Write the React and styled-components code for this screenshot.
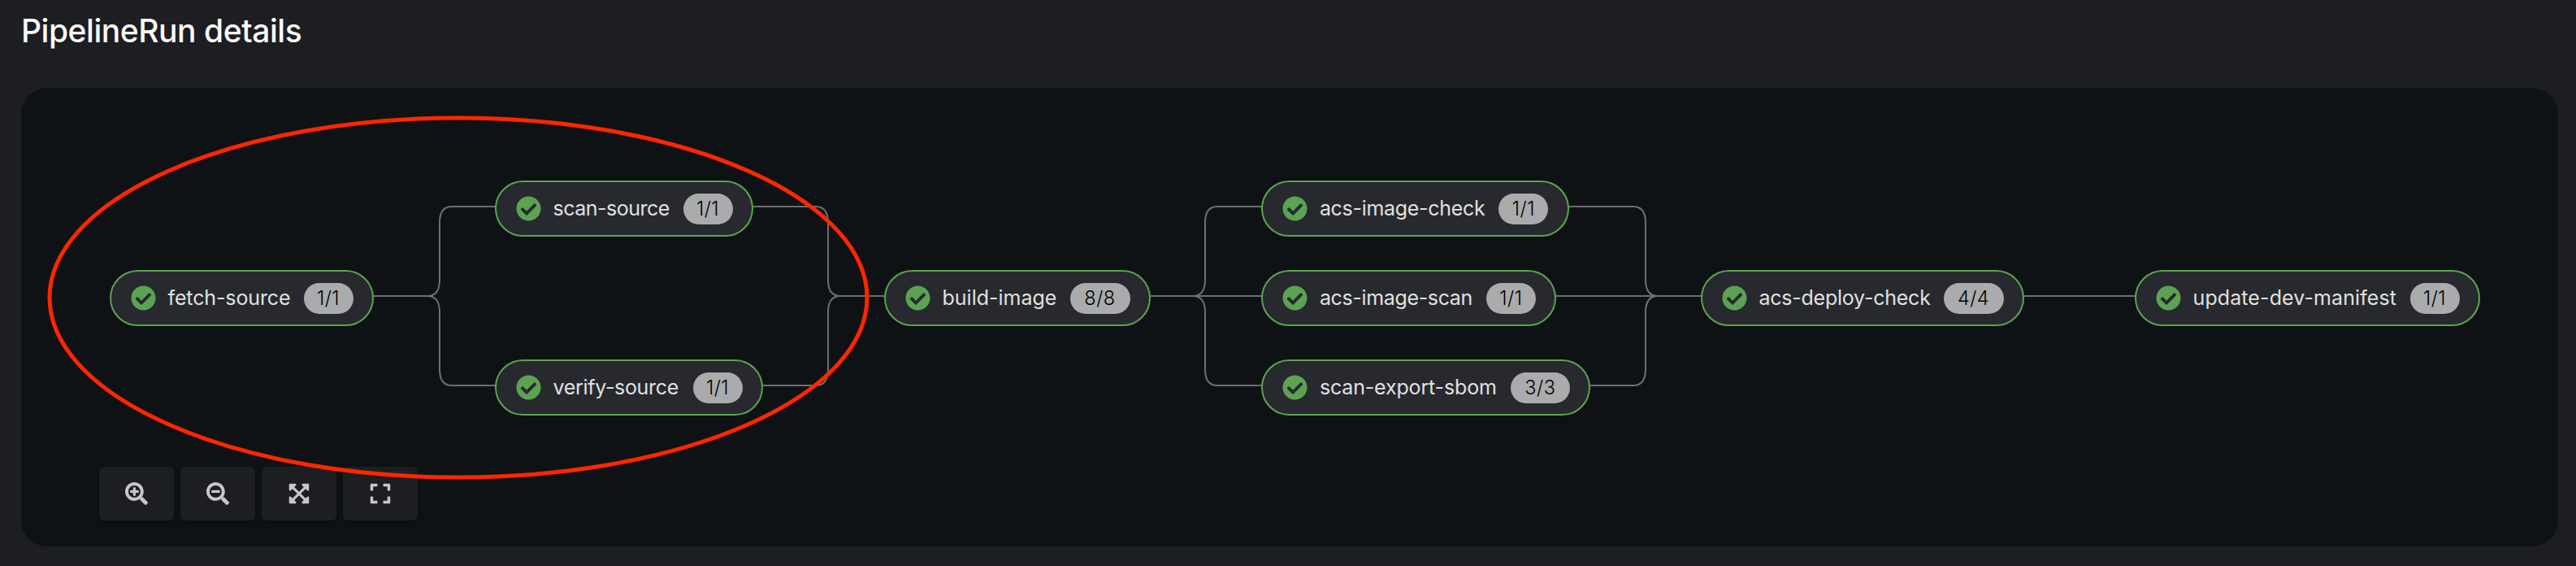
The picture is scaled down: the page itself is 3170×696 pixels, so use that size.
import React from 'react';
import styled, { createGlobalStyle } from 'styled-components';
import { FaCheckCircle, FaSearchPlus, FaSearchMinus, FaExpandArrowsAlt, FaExpand } from 'react-icons/fa';

const GlobalStyle = createGlobalStyle`
  * { box-sizing: border-box; }
  body { margin: 0; background: #1d1e21; font-family: Inter, "Liberation Sans", sans-serif; }
`;

const Page = styled.main`
  height: 696px;
  display: flex;
  flex-direction: column;
  padding: 12px 22px 24px 26px;
`;

const Title = styled.h2`
  margin: 0 0 44px;
  height: 52px;
  line-height: 52px;
  font-size: 39px;
  font-weight: 500;
  letter-spacing: -0.45px;
  color: #fafafa;
`;

const Panel = styled.section`
  position: relative;
  flex: 1;
  display: flex;
  align-items: flex-end;
  padding: 0 96px 32px;
  border-radius: 32px;
  background: #0f1214;
`;

const Toolbar = styled.div`
  display: flex;
  gap: 8px;
`;

const ToolButton = styled.button`
  width: 92px;
  height: 66px;
  padding: 0;
  display: flex;
  align-items: center;
  justify-content: center;
  border: 0;
  border-radius: 6px;
  background: #1d1e21;
  box-shadow: 0 2px 4px rgba(0, 0, 0, 0.35);
  color: #c7c7c9;
  font-size: 28px;
`;

const Canvas = styled.div`
  position: absolute;
  inset: -108px -22px -24px -26px;
  pointer-events: none;
`;

const Drawing = styled.svg`
  position: absolute;
  inset: 0;
  width: 100%;
  height: 100%;
  fill: none;
`;

const Node = styled.div`
  position: absolute;
  left: ${(p) => p.$x}px;
  top: ${(p) => p.$y}px;
  width: ${(p) => p.$w}px;
  height: 69px;
  display: flex;
  align-items: center;
  padding: 0 23.5px;
  border: 2px solid #5ba352;
  border-radius: 35px;
  background: #27292e;
  color: #e0e0e0;
`;

const Status = styled(FaCheckCircle)`
  width: 31px;
  height: 31px;
  flex: none;
  color: #5ba352;
`;

const Label = styled.span`
  margin: 0 0 2px 15px;
  font-size: 25px;
  line-height: 32px;
  letter-spacing: ${(p) => p.$track}px;
  white-space: nowrap;
`;

const Count = styled.span`
  width: ${(p) => p.$w}px;
  height: 38px;
  margin-left: auto;
  border-radius: 19px;
  background: #aaabac;
  color: #000;
  font-size: 23.5px;
  font-weight: 300;
  line-height: 38px;
  letter-spacing: 0.5px;
  text-align: center;
`;

const nodes = [
  { name: 'fetch-source', count: '1/1', x: 135, y: 332, w: 325, badge: 61, track: -0.12 },
  { name: 'scan-source', count: '1/1', x: 609, y: 222, w: 318, badge: 61, track: -0.5 },
  { name: 'verify-source', count: '1/1', x: 609, y: 442, w: 330, badge: 61, track: -0.32 },
  { name: 'build-image', count: '8/8', x: 1088, y: 332, w: 328, badge: 74, track: 0 },
  { name: 'acs-image-check', count: '1/1', x: 1552.4, y: 222, w: 378.5, badge: 61, track: -0.31 },
  { name: 'acs-image-scan', count: '1/1', x: 1552.4, y: 332, w: 363, badge: 61, track: -0.35 },
  { name: 'scan-export-sbom', count: '3/3', x: 1552.4, y: 442, w: 405, badge: 73, track: -0.16 },
  { name: 'acs-deploy-check', count: '4/4', x: 2093, y: 332, w: 398, badge: 74, track: -0.24 },
  { name: 'update-dev-manifest', count: '1/1', x: 2627, y: 332, w: 425, badge: 61, track: 0.1 },
];

const fork = (x0, v, x1) =>
  `M${x0} 364H${v - 15}Q${v} 364 ${v} 344V274Q${v} 254 ${v + 15} 254H${x1}` +
  `M${v - 15} 364Q${v} 364 ${v} 384V454Q${v} 474 ${v + 15} 474H${x1}`;

const join = (top, bottom, v, x1) =>
  `M${top} 254H${v - 15}Q${v} 254 ${v} 274V344Q${v} 364 ${v + 15} 364H${x1}` +
  `M${bottom} 474H${v - 15}Q${v} 474 ${v} 454V384Q${v} 364 ${v + 15} 364`;

const edges = [
  fork(459, 541, 611),
  join(926, 938, 1019, 1089),
  fork(1415, 1483, 1554) + 'M1468 364H1554',
  join(1929, 1956, 2025, 2094) + 'M1914 364H2040',
  'M2490 364H2628',
];

const tools = [FaSearchPlus, FaSearchMinus, FaExpandArrowsAlt, FaExpand];

export default function App() {
  return (
    <>
      <GlobalStyle />
      <Page>
        <Title>PipelineRun details</Title>
        <Panel>
          <Toolbar>
            {tools.map((Icon, i) => (
              <ToolButton key={i}><Icon /></ToolButton>
            ))}
          </Toolbar>
          <Canvas>
            <Drawing stroke="#6b6e72" strokeWidth="2">
              {edges.map((d) => <path key={d} d={d} />)}
            </Drawing>
            {nodes.map((n) => (
              <Node key={n.name} $x={n.x} $y={n.y} $w={n.w}>
                <Status />
                <Label $track={n.track}>{n.name}</Label>
                <Count $w={n.badge}>{n.count}</Count>
              </Node>
            ))}
            <Drawing stroke="#ff2600" strokeWidth="5">
              <ellipse cx="564" cy="366" rx="503" ry="221" />
            </Drawing>
          </Canvas>
        </Panel>
      </Page>
    </>
  );
}
